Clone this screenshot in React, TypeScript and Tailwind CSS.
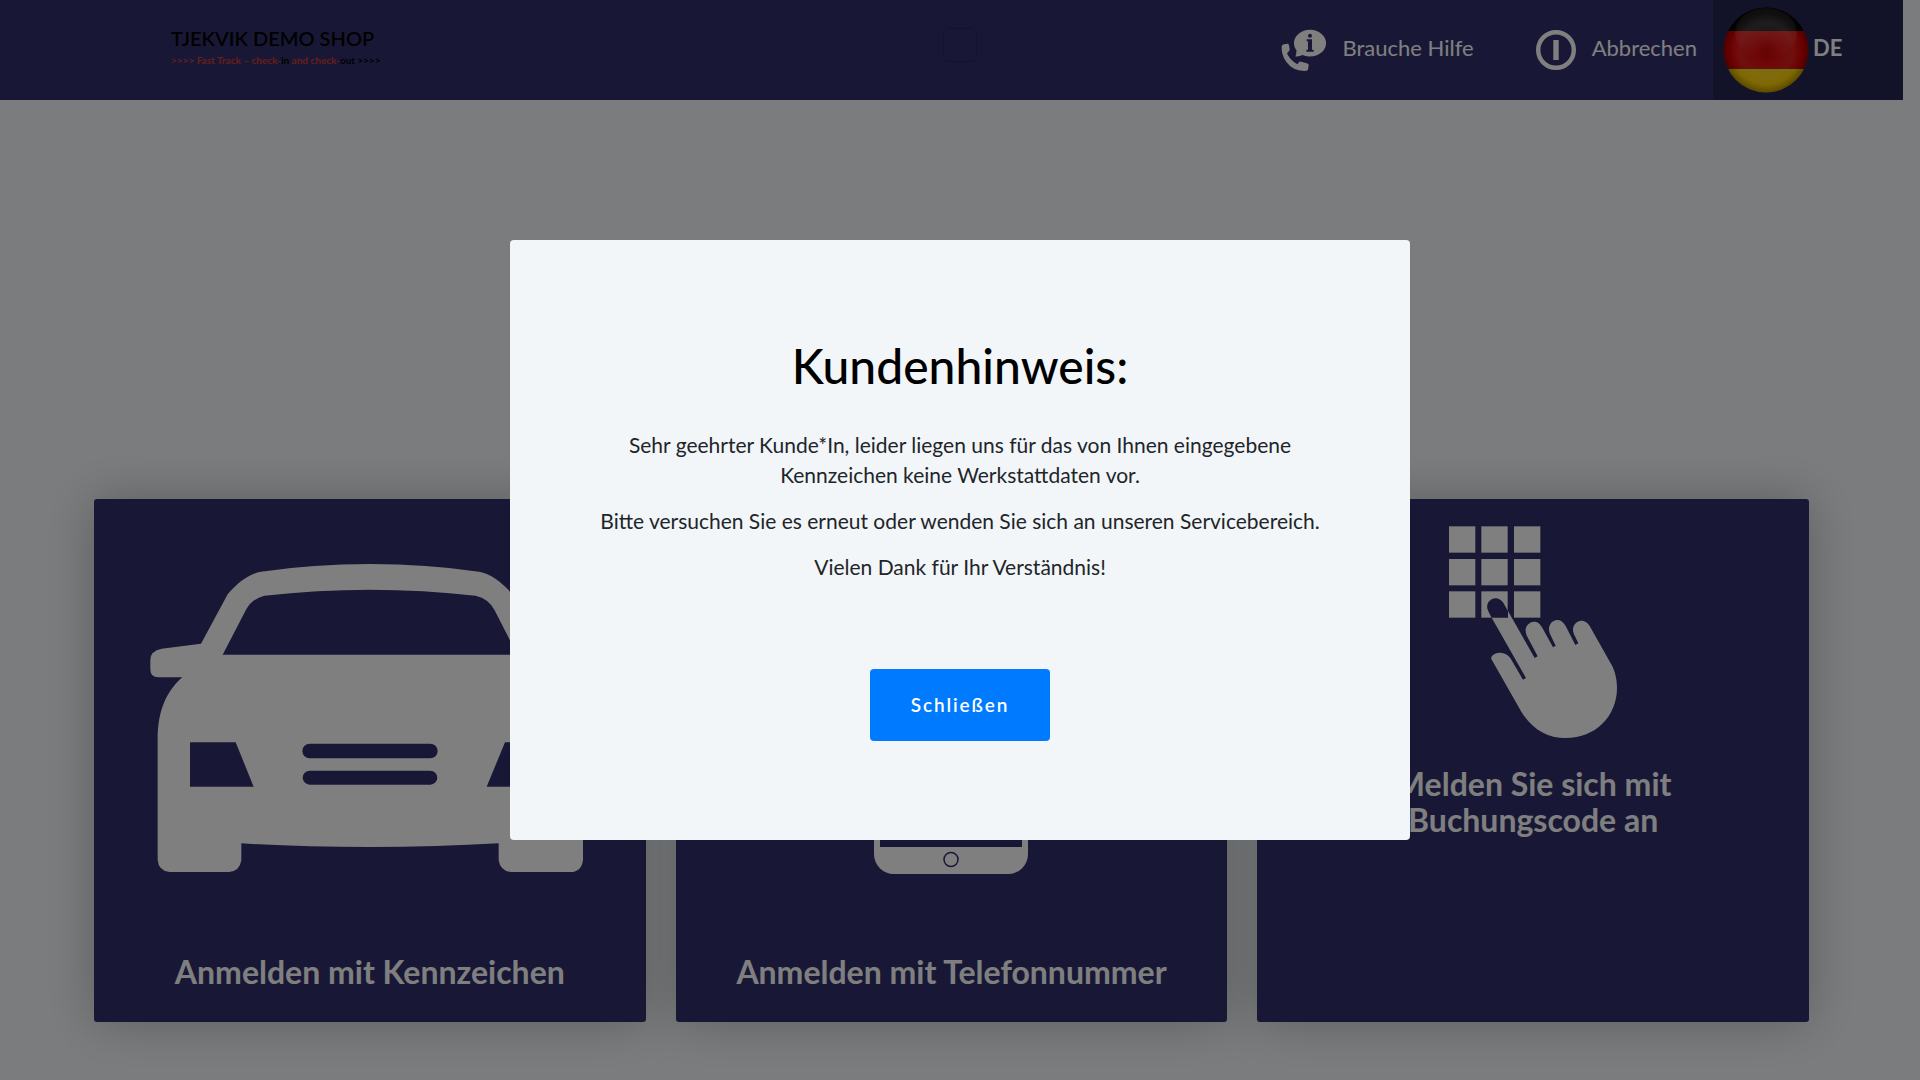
import type { ReactNode } from "react";

const CARD_BLUE = "#31316d";

function HelpIcon() {
  return (
    <svg viewBox="94 85 138 128" className="h-[43px] w-[46px]" aria-hidden="true">
      <path
        fill="#fff"
        d="M96 137Q97 131 103 130L113 129Q117 129 118 133L120 145Q120 149 117 152L112 157Q120 177 143 190L148 184Q150 181 155 183L173 188Q178 189 177 194L175 206Q174 210 169 210Q130 212 109 182Q95 162 96 137Z"
      />
      <path fill="#fff" d="M140 150Q141 160 137 167Q150 168 160 162Z" />
      <ellipse cx="181" cy="127" rx="48" ry="40" fill="#fff" />
      <circle cx="181" cy="105" r="6" fill={CARD_BLUE} />
      <path fill={CARD_BLUE} d="M171 115H187V147H192V153H170V147H175V121H171Z" />
    </svg>
  );
}

function CancelIcon() {
  return (
    <svg viewBox="0 0 40 40" className="size-10" aria-hidden="true">
      <circle cx="20" cy="20" r="17.8" fill="none" stroke="#fff" strokeWidth="4.4" />
      <rect x="17.3" y="10" width="5.4" height="20" fill="#fff" />
    </svg>
  );
}

function GermanFlag() {
  return (
    <svg viewBox="0 0 86 86" className="size-[86px]" aria-hidden="true">
      <defs>
        <clipPath id="flag-round">
          <circle cx="43" cy="43" r="42.5" />
        </clipPath>
        <radialGradient id="flag-edge">
          <stop offset="0" stopColor="#000" stopOpacity="0.1" />
          <stop offset="0.3" stopColor="#000" stopOpacity="0" />
          <stop offset="0.8" stopColor="#000" stopOpacity="0" />
          <stop offset="1" stopColor="#000" stopOpacity="0.3" />
        </radialGradient>
        <radialGradient id="flag-gloss">
          <stop offset="0" stopColor="#fff" stopOpacity="0" />
          <stop offset="0.75" stopColor="#fff" stopOpacity="0.12" />
          <stop offset="1" stopColor="#fff" stopOpacity="0" />
        </radialGradient>
        <linearGradient id="flag-shine" x1="0" y1="0" x2="0" y2="1">
          <stop offset="0" stopColor="#fff" stopOpacity="0.13" />
          <stop offset="0.5" stopColor="#fff" stopOpacity="0.11" />
          <stop offset="1" stopColor="#fff" stopOpacity="0" />
        </linearGradient>
      </defs>
      <g clipPath="url(#flag-round)">
        <rect width="86" height="24" fill="#040404" />
        <rect y="24" width="86" height="38" fill="#dc0000" />
        <rect y="62" width="86" height="24" fill="#ffd000" />
        <rect y="61" width="86" height="1" fill="#8a2a00" />
        <ellipse cx="43" cy="26" rx="31" ry="25" fill="url(#flag-shine)" />
        <circle cx="43" cy="43" r="36" fill="url(#flag-gloss)" />
        <rect width="86" height="86" fill="url(#flag-edge)" />
      </g>
    </svg>
  );
}

function CarIcon() {
  return (
    <svg viewBox="30 43 1318 924" className="h-[308px] w-[440px] max-w-full" aria-hidden="true">
      <path
        fill="#fff"
        fillRule="evenodd"
        d="M182 282L262 134C290 100 325 73 362 66Q520 43 689 43T1016 66C1053 73 1088 100 1116 134L1196 282L1314 297Q1348 304 1348 330V358Q1348 383 1324 383H1253C1300 424 1328 480 1328 570V930Q1324 967 1290 967H1113Q1080 965 1075 932V881Q890 892 689 892T303 881V932Q298 965 266 967H88Q54 963 52 930V570C52 480 80 424 126 383H54Q30 383 30 358V330Q30 304 64 297ZM247 315H1131L1062 180Q1044 147 1006 138Q850 120 689 120T372 138Q336 147 317 180ZM149 578V711H340L286 578ZM1229 578V711H1039L1094 578ZM508 582A22 22 0 0 0 508 626H870A22 22 0 0 0 870 582ZM508 663A21 21 0 0 0 508 705H870A21 21 0 0 0 870 663Z"
      />
    </svg>
  );
}

function PhoneIcon() {
  return (
    <svg viewBox="0 0 154 310" className="h-[310px] w-[154px]" aria-hidden="true">
      <rect width="154" height="310" rx="20" fill="#fff" />
      <rect x="6" y="28" width="142" height="255" fill={CARD_BLUE} />
      <rect x="57" y="12" width="40" height="5" rx="2.5" fill={CARD_BLUE} />
      <circle cx="77" cy="295.5" r="7" fill="none" stroke={CARD_BLUE} strokeWidth="1.5" />
    </svg>
  );
}

const KEY_X = [30, 127, 225];
const KEY_Y = [31, 129, 226];

function KeypadIcon() {
  return (
    <svg viewBox="30 30 504 636" className="h-[212px] w-[168px]" aria-hidden="true">
      {KEY_Y.map((y) => KEY_X.map((x) => <rect key={`${x}-${y}`} x={x} y={y} width="79" height="79" fill="#fff" />))}
      <path fill={CARD_BLUE} d="M158 306L148 286A25 25 0 0 1 192 259L208 287V306Z" />
      <path
        fill="#fff"
        d="M158 305L261 486L252 491L214 426C203 412 190 410 182 410C165 411 155 420 157 429L247 587C280 640 325 666 380 666C470 666 534 600 534 515C534 490 528 465 518 447L452 330C445 318 436 314 427 314C412 315 402 328 402 341C402 347 404 352 406 357L418 382L409 387L380 330C372 317 364 312 354 312C340 313 330 325 330 339C330 346 332 352 335 358L350 389L342 394L309 334C302 321 295 317 285 317C270 318 259 330 260 344C260 350 262 356 265 362L296 421L287 426L207 285V305Z"
      />
    </svg>
  );
}

function Card({ children }: { children: ReactNode }) {
  return (
    <a
      href="#"
      className="flex min-h-[523px] flex-col items-center rounded-[3px] bg-[#31316d] text-center text-[32px] leading-9 font-bold text-white shadow-[0_0_50px_rgba(0,0,0,0.25)]"
    >
      {children}
    </a>
  );
}

export default function App() {
  return (
    <div className="min-h-screen bg-[#f7f9fb] font-['Lato',sans-serif]">
      <div className="pr-[17px]">
        <header className="flex h-[100px] items-stretch bg-[#31316d] text-white">
          <a href="#" className="mt-6 ml-[171px] flex flex-col text-black">
            <span className="text-xl leading-7 font-semibold">TJEKVIK DEMO SHOP</span>
            <span className="text-[10px] leading-4 font-bold text-[#d03a34]">
              &gt;&gt;&gt;&gt; Fast Track – check-<span className="text-black">in</span> and check-
              <span className="text-black">out &gt;&gt;&gt;&gt;</span>
            </span>
          </a>
          <nav className="ml-auto flex items-stretch text-[22px]">
            <a href="#" className="mr-[62px] flex items-center gap-4">
              <HelpIcon />
              <span className="pb-1.5">Brauche Hilfe</span>
            </a>
            <a href="#" className="mr-4 flex items-center gap-4">
              <CancelIcon />
              <span className="pb-1.5">Abbrechen</span>
            </a>
            <button type="button" className="flex w-[190px] items-center gap-1 bg-[#252550] pl-[10px] font-bold">
              <GermanFlag />
              <span className="pb-1.5">DE</span>
            </button>
          </nav>
        </header>

        <main className="grid grid-cols-3 gap-[30px] px-[94px] pt-[399px] pb-[58px]">
          <Card>
            <div className="pt-[65px]">
              <CarIcon />
            </div>
            <span className="mt-auto pb-8">Anmelden mit Kennzeichen</span>
          </Card>
          <Card>
            <div className="pt-[65px]">
              <PhoneIcon />
            </div>
            <span className="mt-auto pb-8">Anmelden mit Telefonnummer</span>
          </Card>
          <Card>
            <div className="pt-[27px]">
              <KeypadIcon />
            </div>
            <span className="mt-7 max-w-[300px]">Melden Sie sich mit Buchungscode an</span>
          </Card>
        </main>
      </div>

      <div className="fixed inset-0 flex items-center justify-center bg-black/50">
        <div className="absolute top-7 size-[34px] rounded-md border border-black/20" />
        <div
          role="dialog"
          aria-modal="true"
          aria-labelledby="notice-title"
          className="flex w-[900px] max-w-full flex-col items-center rounded-[4px] bg-[#f2f6f9] px-[75px] pt-24 pb-[99px] text-center text-black"
        >
          <h1 id="notice-title" className="text-5xl leading-[60px] font-medium">
            Kundenhinweis:
          </h1>
          <div className="mt-[34px] flex flex-col gap-4 text-[21px] leading-[30px] text-[#212529]">
            <p>Sehr geehrter Kunde*In, leider liegen uns für das von Ihnen eingegebene Kennzeichen keine Werkstattdaten vor.</p>
            <p>Bitte versuchen Sie es erneut oder wenden Sie sich an unseren Servicebereich.</p>
            <p>Vielen Dank für Ihr Verständnis!</p>
          </div>
          <button
            type="button"
            className="mt-[87px] h-[72px] w-[180px] rounded-[4px] bg-[#007bff] text-[19px] font-semibold tracking-widest text-white"
          >
            Schließen
          </button>
        </div>
      </div>
    </div>
  );
}
